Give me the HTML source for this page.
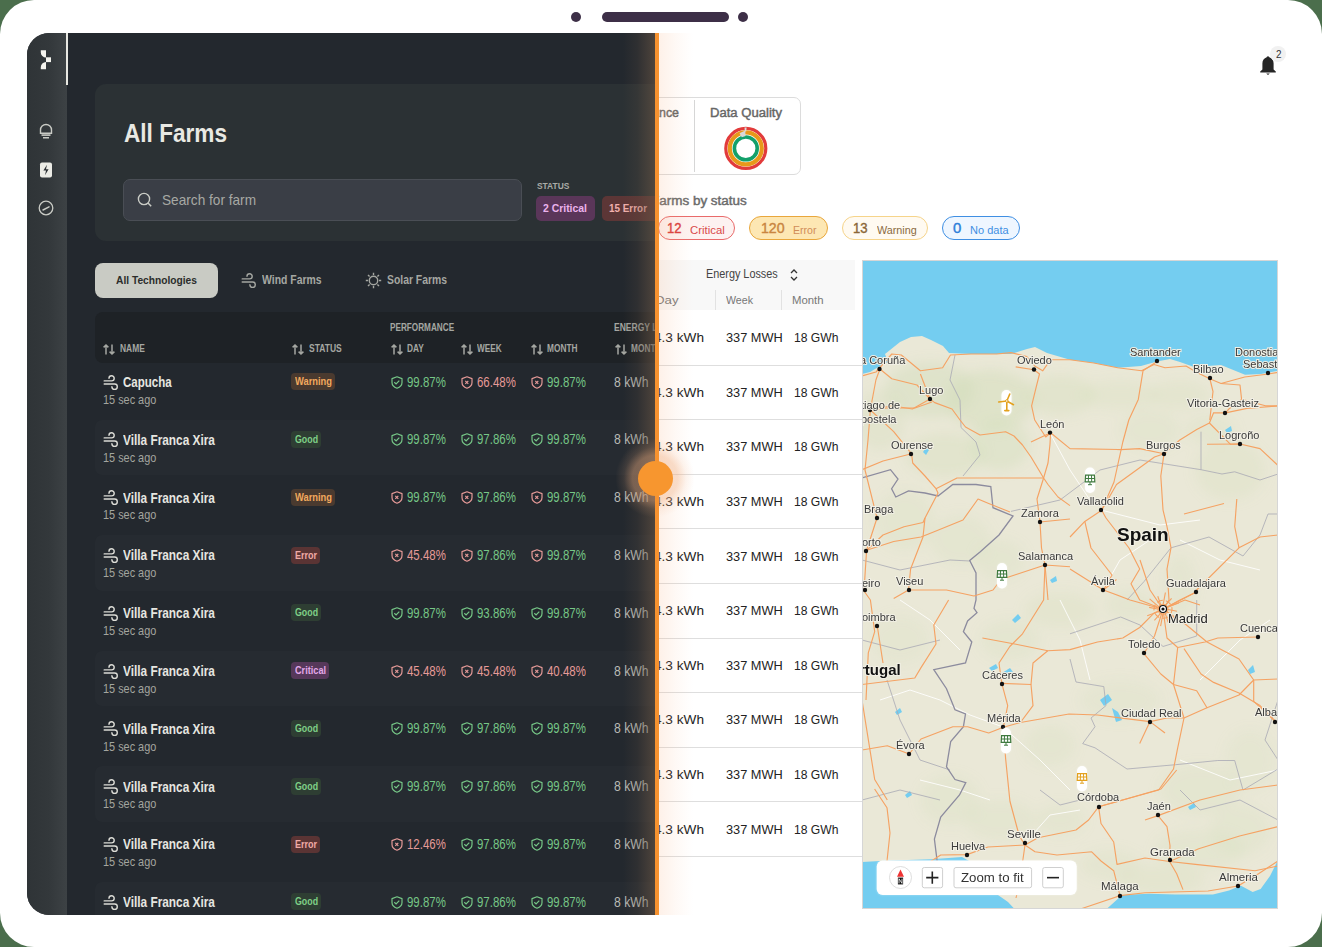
<!DOCTYPE html>
<html><head><meta charset="utf-8">
<style>
*{box-sizing:border-box;margin:0;padding:0}
html,body{width:1322px;height:947px;overflow:hidden;background:#4b6e4c;font-family:"Liberation Sans",sans-serif}
.abs{position:absolute}
.t{position:absolute;white-space:nowrap;line-height:0}
.i{position:absolute;overflow:visible}
#frame{position:absolute;left:0;top:0;width:1322px;height:947px;background:#fff;border-radius:34px;overflow:hidden}
.dot{position:absolute;background:#3d2f47;border-radius:6px}
#dark{position:absolute;left:27px;top:33px;width:628px;height:882px;background:#23282e;border-radius:22px 0 0 22px;overflow:hidden}
#dk{position:absolute;left:-27px;top:-33px;width:1322px;height:947px}
</style></head><body>
<div id="frame">
  <div class="dot" style="left:571px;top:12px;width:10px;height:10px"></div>
  <div class="dot" style="left:602px;top:12px;width:127px;height:10px"></div>
  <div class="dot" style="left:738px;top:12px;width:10px;height:10px"></div>

<div id="light">
<div class="abs" style="left:560px;top:97px;width:241px;height:78px;border:1px solid #dcdcdc;border-radius:7px;background:#fff"></div>
<div class="abs" style="left:694px;top:100px;width:1px;height:72px;background:#d6d6d6"></div>
<div class="t" style="left:608.00px;top:113.46px;font-size:13.08px;color:#666;transform:scaleX(0.9482);transform-origin:0 0;-webkit-text-stroke:0.45px #666;">Performance</div>
<div class="t" style="left:709.50px;top:113.46px;font-size:13.08px;color:#666;transform:scaleX(1.0003);transform-origin:0 0;-webkit-text-stroke:0.45px #666;">Data Quality</div>
<svg class="i" style="left:724px;top:127px" width="44" height="44" viewBox="0 0 44 44">
<circle cx="21.8" cy="21.4" r="20" fill="none" stroke="#e23b3b" stroke-width="3.2"/>
<circle cx="21.8" cy="21.4" r="16" fill="none" stroke="#e8981a" stroke-width="4.2"/>
<circle cx="21.8" cy="21.4" r="11.4" fill="none" stroke="#13a06a" stroke-width="3.6"/>
<path d="M20.5 0.5L22.6 0.5L22.2 4.6L20.8 4.6Z" fill="#dcdcdc"/>
<path d="M21.2 3.5L21.6 8.9L17.8 10.2L15.5 6.3Z" fill="#d8d8d8"/>
</svg>
<div class="t" style="left:651.30px;top:200.96px;font-size:13.08px;color:#6b6b6b;transform:scaleX(1.0297);transform-origin:0 0;-webkit-text-stroke:0.45px #6b6b6b;">Farms by status</div>
<div class="abs" style="left:658px;top:216px;width:77px;height:24px;border:1.2px solid #e96a6a;border-radius:12px;background:#fdf2f1"></div>
<div class="t" style="left:667.00px;top:228.36px;font-size:14.53px;color:#d93b3b;transform:scaleX(0.9032);transform-origin:0 0;-webkit-text-stroke:0.4px #d93b3b;">12</div>
<div class="t" style="left:689.70px;top:229.62px;font-size:10.90px;color:#d94a4a;transform:scaleX(1.0447);transform-origin:0 0;">Critical</div>
<div class="abs" style="left:749px;top:216px;width:79px;height:24px;border:1.2px solid #e9a73c;border-radius:12px;background:#fde7b3"></div>
<div class="t" style="left:760.60px;top:228.36px;font-size:14.53px;color:#c98540;transform:scaleX(0.9733);transform-origin:0 0;-webkit-text-stroke:0.4px #c98540;">120</div>
<div class="t" style="left:792.90px;top:229.62px;font-size:10.90px;color:#d08c58;transform:scaleX(0.9702);transform-origin:0 0;">Error</div>
<div class="abs" style="left:842px;top:216px;width:86px;height:24px;border:1.2px solid #f6d48a;border-radius:12px;background:#fffaf1"></div>
<div class="t" style="left:853.00px;top:228.36px;font-size:14.53px;color:#8a6636;transform:scaleX(0.9032);transform-origin:0 0;-webkit-text-stroke:0.4px #8a6636;">13</div>
<div class="t" style="left:876.60px;top:229.62px;font-size:10.90px;color:#8a6a40;transform:scaleX(0.9904);transform-origin:0 0;">Warning</div>
<div class="abs" style="left:942px;top:216px;width:78px;height:24px;border:1.2px solid #3f8fe3;border-radius:12px;background:#eef6ff"></div>
<div class="t" style="left:953.00px;top:228.36px;font-size:14.53px;color:#2f7fd9;transform:scaleX(1.0269);transform-origin:0 0;-webkit-text-stroke:0.4px #2f7fd9;">0</div>
<div class="t" style="left:969.60px;top:229.62px;font-size:10.90px;color:#3f8fe3;transform:scaleX(1.0111);transform-origin:0 0;">No data</div>
<div class="abs" style="left:560px;top:260px;width:295px;height:50px;background:#f8f8f8"></div>
<div class="t" style="left:706.00px;top:274.47px;font-size:11.92px;color:#444;transform:scaleX(0.9108);transform-origin:0 0;">Energy Losses</div>
<svg class="i" style="left:790px;top:268px" width="8" height="14" viewBox="0 0 8 14"><path d="M1 5L4 2L7 5M1 9L4 12L7 9" fill="none" stroke="#333" stroke-width="1.3"/></svg>
<div class="abs" style="left:715px;top:290px;width:1px;height:20px;background:#e2e2e2"></div>
<div class="abs" style="left:781px;top:290px;width:1px;height:20px;background:#e2e2e2"></div>
<div class="t" style="left:655.00px;top:299.87px;font-size:11.34px;color:#777;transform:scaleX(1.1706);transform-origin:0 0;">Day</div>
<div class="t" style="left:726.00px;top:299.87px;font-size:11.34px;color:#777;transform:scaleX(0.9384);transform-origin:0 0;">Week</div>
<div class="t" style="left:792.40px;top:299.87px;font-size:11.34px;color:#777;transform:scaleX(1.0030);transform-origin:0 0;">Month</div>
<div class="t" style="left:653.50px;top:338.26px;font-size:13.08px;color:#222;transform:scaleX(1.0421);transform-origin:0 0;">4.3 kWh</div>
<div class="t" style="left:725.70px;top:338.26px;font-size:13.08px;color:#222;transform:scaleX(0.9768);transform-origin:0 0;">337 MWH</div>
<div class="t" style="left:793.60px;top:338.26px;font-size:13.08px;color:#222;transform:scaleX(0.9254);transform-origin:0 0;">18 GWh</div>
<div class="abs" style="left:560px;top:364.5px;width:302px;height:1px;background:#dedede"></div>
<div class="t" style="left:653.50px;top:392.86px;font-size:13.08px;color:#222;transform:scaleX(1.0421);transform-origin:0 0;">4.3 kWh</div>
<div class="t" style="left:725.70px;top:392.86px;font-size:13.08px;color:#222;transform:scaleX(0.9768);transform-origin:0 0;">337 MWH</div>
<div class="t" style="left:793.60px;top:392.86px;font-size:13.08px;color:#222;transform:scaleX(0.9254);transform-origin:0 0;">18 GWh</div>
<div class="abs" style="left:560px;top:419.1px;width:302px;height:1px;background:#dedede"></div>
<div class="t" style="left:653.50px;top:447.46px;font-size:13.08px;color:#222;transform:scaleX(1.0421);transform-origin:0 0;">4.3 kWh</div>
<div class="t" style="left:725.70px;top:447.46px;font-size:13.08px;color:#222;transform:scaleX(0.9768);transform-origin:0 0;">337 MWH</div>
<div class="t" style="left:793.60px;top:447.46px;font-size:13.08px;color:#222;transform:scaleX(0.9254);transform-origin:0 0;">18 GWh</div>
<div class="abs" style="left:560px;top:473.7px;width:302px;height:1px;background:#dedede"></div>
<div class="t" style="left:653.50px;top:502.06px;font-size:13.08px;color:#222;transform:scaleX(1.0421);transform-origin:0 0;">4.3 kWh</div>
<div class="t" style="left:725.70px;top:502.06px;font-size:13.08px;color:#222;transform:scaleX(0.9768);transform-origin:0 0;">337 MWH</div>
<div class="t" style="left:793.60px;top:502.06px;font-size:13.08px;color:#222;transform:scaleX(0.9254);transform-origin:0 0;">18 GWh</div>
<div class="abs" style="left:560px;top:528.3px;width:302px;height:1px;background:#dedede"></div>
<div class="t" style="left:653.50px;top:556.66px;font-size:13.08px;color:#222;transform:scaleX(1.0421);transform-origin:0 0;">4.3 kWh</div>
<div class="t" style="left:725.70px;top:556.66px;font-size:13.08px;color:#222;transform:scaleX(0.9768);transform-origin:0 0;">337 MWH</div>
<div class="t" style="left:793.60px;top:556.66px;font-size:13.08px;color:#222;transform:scaleX(0.9254);transform-origin:0 0;">18 GWh</div>
<div class="abs" style="left:560px;top:582.9px;width:302px;height:1px;background:#dedede"></div>
<div class="t" style="left:653.50px;top:611.26px;font-size:13.08px;color:#222;transform:scaleX(1.0421);transform-origin:0 0;">4.3 kWh</div>
<div class="t" style="left:725.70px;top:611.26px;font-size:13.08px;color:#222;transform:scaleX(0.9768);transform-origin:0 0;">337 MWH</div>
<div class="t" style="left:793.60px;top:611.26px;font-size:13.08px;color:#222;transform:scaleX(0.9254);transform-origin:0 0;">18 GWh</div>
<div class="abs" style="left:560px;top:637.5px;width:302px;height:1px;background:#dedede"></div>
<div class="t" style="left:653.50px;top:665.86px;font-size:13.08px;color:#222;transform:scaleX(1.0421);transform-origin:0 0;">4.3 kWh</div>
<div class="t" style="left:725.70px;top:665.86px;font-size:13.08px;color:#222;transform:scaleX(0.9768);transform-origin:0 0;">337 MWH</div>
<div class="t" style="left:793.60px;top:665.86px;font-size:13.08px;color:#222;transform:scaleX(0.9254);transform-origin:0 0;">18 GWh</div>
<div class="abs" style="left:560px;top:692.1px;width:302px;height:1px;background:#dedede"></div>
<div class="t" style="left:653.50px;top:720.46px;font-size:13.08px;color:#222;transform:scaleX(1.0421);transform-origin:0 0;">4.3 kWh</div>
<div class="t" style="left:725.70px;top:720.46px;font-size:13.08px;color:#222;transform:scaleX(0.9768);transform-origin:0 0;">337 MWH</div>
<div class="t" style="left:793.60px;top:720.46px;font-size:13.08px;color:#222;transform:scaleX(0.9254);transform-origin:0 0;">18 GWh</div>
<div class="abs" style="left:560px;top:746.7px;width:302px;height:1px;background:#dedede"></div>
<div class="t" style="left:653.50px;top:775.06px;font-size:13.08px;color:#222;transform:scaleX(1.0421);transform-origin:0 0;">4.3 kWh</div>
<div class="t" style="left:725.70px;top:775.06px;font-size:13.08px;color:#222;transform:scaleX(0.9768);transform-origin:0 0;">337 MWH</div>
<div class="t" style="left:793.60px;top:775.06px;font-size:13.08px;color:#222;transform:scaleX(0.9254);transform-origin:0 0;">18 GWh</div>
<div class="abs" style="left:560px;top:801.3px;width:302px;height:1px;background:#dedede"></div>
<div class="t" style="left:653.50px;top:829.66px;font-size:13.08px;color:#222;transform:scaleX(1.0421);transform-origin:0 0;">4.3 kWh</div>
<div class="t" style="left:725.70px;top:829.66px;font-size:13.08px;color:#222;transform:scaleX(0.9768);transform-origin:0 0;">337 MWH</div>
<div class="t" style="left:793.60px;top:829.66px;font-size:13.08px;color:#222;transform:scaleX(0.9254);transform-origin:0 0;">18 GWh</div>
<div class="abs" style="left:560px;top:855.9px;width:302px;height:1px;background:#dedede"></div>
<svg class="i" style="left:1259px;top:55px" width="18" height="21" viewBox="0 0 18 21">
<path d="M9 1.2C10 1.2 10.3 2 10.3 2.3C13 3.2 14.6 5.5 14.6 8.5V14.6L16.8 16.6V17.4H1.2V16.6L3.4 14.6V8.5C3.4 5.5 5 3.2 7.7 2.3C7.7 2 8 1.2 9 1.2Z" fill="#262626"/>
<path d="M7.2 18.4H10.8L9 20Z" fill="#262626"/></svg>
<div class="abs" style="left:1270px;top:46px;width:16px;height:16px;border-radius:8px;background:#f1f1f1"></div>
<div class="t" style="left:1275.50px;top:54.22px;font-size:10.90px;color:#333;transform:scaleX(0.9073);transform-origin:0 0;">2</div>
</div>
<div class="abs" id="map" style="left:862px;top:260px;width:416px;height:649px;background:#ece9dc;overflow:hidden">
<svg style="position:absolute;left:0;top:0" width="416" height="649" viewBox="0 0 416 649">
<defs><filter id="bl" x="-50%" y="-50%" width="200%" height="200%"><feGaussianBlur stdDeviation="6"/></filter><filter id="sh" x="-50%" y="-50%" width="200%" height="200%"><feGaussianBlur stdDeviation="1.2"/></filter></defs>
<rect width="416" height="649" fill="#eae8d7"/>
<g filter="url(#bl)">
<ellipse cx="68.0" cy="130.0" rx="45" ry="28" fill="#cfdcb6" opacity="0.39"/>
<ellipse cx="128.0" cy="140.0" rx="45" ry="30" fill="#cfdcb6" opacity="0.42"/>
<ellipse cx="198.0" cy="135.0" rx="35" ry="20" fill="#cfdcb6" opacity="0.32"/>
<ellipse cx="18.0" cy="160.0" rx="25" ry="30" fill="#cfdcb6" opacity="0.28"/>
<ellipse cx="83.0" cy="195.0" rx="40" ry="22" fill="#cfdcb6" opacity="0.32"/>
<ellipse cx="138.0" cy="185.0" rx="30" ry="25" fill="#cfdcb6" opacity="0.35"/>
<ellipse cx="258.0" cy="135.0" rx="40" ry="15" fill="#cfdcb6" opacity="0.24"/>
<ellipse cx="318.0" cy="135.0" rx="30" ry="15" fill="#cfdcb6" opacity="0.24"/>
<ellipse cx="368.0" cy="210.0" rx="35" ry="30" fill="#cfdcb6" opacity="0.24"/>
<ellipse cx="348.0" cy="170.0" rx="25" ry="15" fill="#cfdcb6" opacity="0.21"/>
<ellipse cx="43.0" cy="260.0" rx="30" ry="30" fill="#cfdcb6" opacity="0.21"/>
<ellipse cx="98.0" cy="280.0" rx="30" ry="25" fill="#cfdcb6" opacity="0.21"/>
<ellipse cx="268.0" cy="345.0" rx="25" ry="15" fill="#cfdcb6" opacity="0.21"/>
<ellipse cx="198.0" cy="350.0" rx="35" ry="18" fill="#cfdcb6" opacity="0.24"/>
<ellipse cx="318.0" cy="325.0" rx="15" ry="30" fill="#cfdcb6" opacity="0.21"/>
<ellipse cx="148.0" cy="380.0" rx="30" ry="20" fill="#cfdcb6" opacity="0.21"/>
<ellipse cx="258.0" cy="440.0" rx="40" ry="20" fill="#cfdcb6" opacity="0.17"/>
<ellipse cx="188.0" cy="485.0" rx="25" ry="20" fill="#cfdcb6" opacity="0.21"/>
<ellipse cx="338.0" cy="530.0" rx="40" ry="25" fill="#cfdcb6" opacity="0.21"/>
<ellipse cx="378.0" cy="570.0" rx="30" ry="25" fill="#cfdcb6" opacity="0.21"/>
<ellipse cx="298.0" cy="620.0" rx="45" ry="15" fill="#cfdcb6" opacity="0.24"/>
<ellipse cx="248.0" cy="605.0" rx="30" ry="15" fill="#cfdcb6" opacity="0.21"/>
<ellipse cx="138.0" cy="560.0" rx="35" ry="20" fill="#cfdcb6" opacity="0.21"/>
<ellipse cx="88.0" cy="540.0" rx="30" ry="25" fill="#cfdcb6" opacity="0.21"/>
<ellipse cx="198.0" cy="560.0" rx="25" ry="15" fill="#cfdcb6" opacity="0.21"/>
<ellipse cx="338.0" cy="590.0" rx="45" ry="20" fill="#cfdcb6" opacity="0.21"/>
<ellipse cx="388.0" cy="500.0" rx="25" ry="30" fill="#cfdcb6" opacity="0.17"/>
<ellipse cx="38.0" cy="380.0" rx="30" ry="25" fill="#cfdcb6" opacity="0.17"/>
<ellipse cx="138.0" cy="300.0" rx="25" ry="20" fill="#cfdcb6" opacity="0.21"/>
<ellipse cx="288.0" cy="170.0" rx="30" ry="20" fill="#cfdcb6" opacity="0.21"/>
</g>
<polygon points="0.0,0.0 416.0,0.0 416.0,110.8 399.0,114.0 383.0,114.8 359.0,105.0 332.0,107.0 318.0,102.0 308.0,99.0 295.0,101.6 279.0,106.0 256.0,107.7 232.0,103.0 208.0,99.7 185.0,93.0 173.0,87.0 165.0,89.0 149.0,94.0 109.0,94.0 87.0,93.0 81.0,86.0 69.0,80.0 60.0,76.0 49.0,77.0 38.0,82.0 23.0,94.0 26.0,102.0 18.0,106.0 8.0,112.0 0.0,114.0" fill="#74cdf0"/>
<polygon points="0.0,602.0 18.0,601.0 73.0,599.0 100.0,597.0 123.0,610.0 136.0,635.0 146.0,642.0 153.0,649.5 0.0,649.5" fill="#74cdf0"/>
<polygon points="244.0,649.5 260.0,635.0 287.0,633.7 313.0,634.5 351.0,634.5 367.0,630.5 379.0,625.8 390.7,632.0 398.6,629.0 408.0,616.0 416.0,600.0 416.0,649.5" fill="#74cdf0"/>
<polygon points="61.0,192.0 65.0,186.0 67.0,190.0 64.0,195.0" fill="#74cdf0"/>
<polygon points="150.0,360.0 156.0,354.0 159.0,358.0 153.0,363.0" fill="#74cdf0"/>
<polygon points="238.0,440.0 246.0,434.0 250.0,440.0 242.0,446.0" fill="#74cdf0"/>
<polygon points="250.0,448.0 256.0,452.0 260.0,460.0 254.0,462.0" fill="#74cdf0"/>
<polygon points="140.0,413.0 148.0,408.0 151.0,412.0 144.0,416.0" fill="#74cdf0"/>
<polygon points="127.0,408.0 134.0,404.0 136.0,408.0 130.0,411.0" fill="#74cdf0"/>
<polygon points="326.0,547.0 332.0,543.0 334.0,547.0 328.0,550.0" fill="#74cdf0"/>
<polygon points="33.0,452.0 38.0,448.0 40.0,452.0 35.0,455.0" fill="#74cdf0"/>
<polygon points="363.0,170.0 369.0,166.0 370.0,171.0 365.0,173.0" fill="#74cdf0"/>
<polygon points="386.0,410.0 391.0,405.0 393.0,412.0 388.0,414.0" fill="#74cdf0"/>
<polygon points="43.0,535.0 48.0,531.0 50.0,535.0 45.0,538.0" fill="#74cdf0"/>
<polygon points="188.0,320.0 194.0,316.0 195.0,321.0 190.0,323.0" fill="#74cdf0"/>
<polyline points="188.0,173.0 208.0,210.0 228.0,240.0" fill="none" stroke="#ffffff" stroke-width="1" opacity="0.85"/>
<polyline points="239.0,250.0 298.0,265.0 338.0,260.0" fill="none" stroke="#ffffff" stroke-width="1" opacity="0.85"/>
<polyline points="141.0,467.0 178.0,500.0 208.0,530.0" fill="none" stroke="#ffffff" stroke-width="1" opacity="0.85"/>
<polyline points="163.0,583.0 188.0,555.0 218.0,550.0" fill="none" stroke="#ffffff" stroke-width="1" opacity="0.85"/>
<polyline points="78.0,440.0 108.0,455.0 141.0,467.0" fill="none" stroke="#ffffff" stroke-width="1" opacity="0.85"/>
<polyline points="241.0,330.0 258.0,300.0 288.0,280.0" fill="none" stroke="#ffffff" stroke-width="1" opacity="0.85"/>
<polyline points="58.0,520.0 98.0,530.0 128.0,540.0" fill="none" stroke="#ffffff" stroke-width="1" opacity="0.85"/>
<polyline points="318.0,500.0 368.0,520.0 416.0,510.0" fill="none" stroke="#ffffff" stroke-width="1" opacity="0.85"/>
<polyline points="38.0,340.0 68.0,360.0 98.0,390.0" fill="none" stroke="#ffffff" stroke-width="1" opacity="0.85"/>
<polyline points="338.0,420.0 378.0,380.0 408.0,360.0" fill="none" stroke="#ffffff" stroke-width="1" opacity="0.85"/>
<polyline points="18.0,440.0 48.0,430.0 78.0,440.0" fill="none" stroke="#ffffff" stroke-width="1" opacity="0.85"/>
<polyline points="318.0,280.0 358.0,300.0 398.0,310.0" fill="none" stroke="#ffffff" stroke-width="1" opacity="0.85"/>
<polyline points="198.0,340.0 218.0,380.0 228.0,420.0" fill="none" stroke="#ffffff" stroke-width="1" opacity="0.85"/>
<polyline points="99.0,167.5 114.0,182.0 118.0,195.0 101.0,216.0" fill="none" stroke="#a9a9b4" stroke-width="1" opacity="0.8"/>
<polyline points="339.0,171.7 339.0,209.7 360.0,214.0 372.7,211.8 398.0,220.0 416.0,214.0" fill="none" stroke="#a9a9b4" stroke-width="1" opacity="0.8"/>
<polyline points="416.0,254.0 406.0,254.0 398.0,275.0 381.0,296.0 347.0,277.0 309.0,287.8 282.0,321.6 265.0,340.0" fill="none" stroke="#a9a9b4" stroke-width="1" opacity="0.8"/>
<polyline points="208.0,399.0 214.0,422.0 241.8,426.6 244.0,445.6 229.0,458.0 233.0,466.7 220.7,483.6 233.0,487.8 265.0,509.0 313.6,504.7 355.8,500.5 372.7,500.5 381.0,530.0 416.0,509.0" fill="none" stroke="#a9a9b4" stroke-width="1" opacity="0.8"/>
<polyline points="208.0,373.8 258.7,357.0 278.0,365.0 301.0,386.5 334.7,376.0 334.7,340.0" fill="none" stroke="#a9a9b4" stroke-width="1" opacity="0.8"/>
<polyline points="93.0,95.0 88.0,120.0 98.0,140.0 99.0,167.5" fill="none" stroke="#a9a9b4" stroke-width="1" opacity="0.8"/>
<polyline points="149.0,251.4 198.0,240.0 238.0,210.0 278.0,200.0 339.0,209.7" fill="none" stroke="#a9a9b4" stroke-width="1" opacity="0.8"/>
<polyline points="0.0,300.0 38.0,310.0 88.0,300.0 108.0,301.0" fill="none" stroke="#a9a9b4" stroke-width="1" opacity="0.8"/>
<polyline points="0.0,380.0 38.0,390.0 78.0,380.0" fill="none" stroke="#a9a9b4" stroke-width="1" opacity="0.8"/>
<polyline points="25.0,420.0 38.0,460.0 58.0,500.0 88.0,510.0" fill="none" stroke="#a9a9b4" stroke-width="1" opacity="0.8"/>
<polyline points="0.0,540.0 38.0,530.0 78.0,540.0" fill="none" stroke="#a9a9b4" stroke-width="1" opacity="0.8"/>
<polyline points="178.0,530.0 198.0,545.0 218.0,540.0" fill="none" stroke="#a9a9b4" stroke-width="1" opacity="0.8"/>
<polyline points="318.0,530.0 338.0,550.0 378.0,540.0 416.0,560.0" fill="none" stroke="#a9a9b4" stroke-width="1" opacity="0.8"/>
<polyline points="416.0,440.0 403.0,480.0 416.0,500.0" fill="none" stroke="#a9a9b4" stroke-width="1" opacity="0.8"/>
<polyline points="0.0,218.0 28.5,209.7 36.0,219.0 29.6,228.7 33.8,237.0 46.5,230.8 63.0,233.0 76.0,236.0 90.8,224.5 114.0,224.5 128.8,226.6 131.0,247.7 151.0,256.0 137.0,275.0 118.0,292.0 107.7,300.5 114.0,313.0 114.0,340.0 112.0,348.4 115.0,352.7 105.6,361.0 101.4,371.7 109.8,382.0 103.5,403.0 71.8,409.7 84.5,428.7 93.0,449.8 103.5,454.0 101.4,466.7 88.7,481.5 84.5,506.8 93.0,519.5 103.8,522.6 97.5,535.0 78.7,557.0 72.4,579.0 75.5,604.0" fill="none" stroke="#8c8b9e" stroke-width="1.3"/>
<g fill="none" stroke="#f5a263" stroke-width="1.15" stroke-linejoin="round">
<polyline points="1.0,115.6 14.0,112.0 29.8,94.0 39.3,95.0 58.4,110.8 80.6,107.7 88.5,95.0 109.0,94.0 134.6,94.0 149.0,92.6 164.8,96.5 172.7,106.0 180.7,110.8 188.6,99.7 208.0,99.7 231.8,103.0 255.7,107.7 279.5,110.8 292.0,104.5 303.0,107.7 324.0,106.0 335.0,112.4 347.8,118.8 359.0,123.5 382.7,117.0 406.5,114.0 415.8,112.4"/>
<polyline points="17.9,109.0 29.8,118.8 55.0,125.0 68.0,139.0 72.7,142.6 90.0,149.0 98.0,160.0 103.5,167.0 118.0,175.0 143.6,171.7 152.0,176.0 160.5,185.0 169.0,197.0 181.6,218.0 186.0,224.5 196.0,237.0 208.0,245.6"/>
<polyline points="58.4,114.0 68.0,139.0"/>
<polyline points="68.0,139.0 50.4,149.0 29.8,145.8 8.3,150.0 13.9,120.0 17.9,109.0"/>
<polyline points="8.4,150.0 25.0,148.0 53.0,148.0 70.0,142.0"/>
<polyline points="153.7,106.9 172.0,109.7 177.5,114.0 174.3,126.7 169.6,145.8 172.7,160.0 183.7,177.0 188.6,172.7"/>
<polyline points="188.6,172.7 188.0,184.0 186.0,203.0 181.6,218.0 175.0,239.0 178.0,262.0 179.5,288.0 183.0,305.0 186.0,340.0"/>
<polyline points="169.0,182.0 188.6,172.7 208.0,188.6 258.7,189.6 277.7,188.6 302.0,193.8"/>
<polyline points="295.0,101.6 281.0,110.8 276.3,139.4 266.8,160.0 260.8,182.0 252.0,222.0 239.7,250.3"/>
<polyline points="347.8,118.5 351.0,131.5 347.8,160.0"/>
<polyline points="359.0,123.5 378.0,125.0 379.6,139.4 366.9,149.0 363.5,152.9"/>
<polyline points="379.6,139.4 403.4,145.8 415.8,145.8"/>
<polyline points="302.0,193.8 317.8,180.0 334.7,169.6 347.4,163.0 351.6,152.7 363.5,152.9 385.0,148.4 416.0,146.0"/>
<polyline points="347.4,163.0 368.5,184.3 378.0,184.0 398.0,188.6 416.0,205.5"/>
<polyline points="345.0,184.3 378.0,184.0"/>
<polyline points="302.0,193.8 298.8,216.0 301.0,249.8 305.0,266.7 309.0,287.8 305.0,309.0 307.0,340.0 301.0,349.3"/>
<polyline points="302.0,193.8 292.5,197.0 254.5,224.5 239.7,250.3 222.8,261.4 208.0,277.0"/>
<polyline points="239.7,250.3 244.0,258.0 267.0,288.0 277.7,309.0 269.0,323.7 277.7,340.0 301.0,349.3"/>
<polyline points="222.8,261.4 229.0,288.0 250.0,315.0 241.4,330.0"/>
<polyline points="374.8,239.0 372.7,266.7 377.0,287.8 398.0,277.0 416.0,275.0"/>
<polyline points="377.0,287.8 334.7,330.0 334.3,332.0 318.0,340.0 301.0,349.3"/>
<polyline points="322.0,254.0 362.0,243.5"/>
<polyline points="208.0,309.0 241.4,330.0 254.5,319.5"/>
<polyline points="241.4,330.0 268.0,340.0 301.0,349.3"/>
<polyline points="0.0,209.7 21.0,201.0 49.6,193.8 31.7,171.7 8.4,150.0"/>
<polyline points="49.6,193.8 50.7,203.0 63.0,216.0 74.0,228.7 76.0,233.0 63.0,258.0 61.0,277.0 48.6,309.0 46.5,330.0"/>
<polyline points="74.0,228.7 95.0,218.0 126.7,218.0 181.6,218.0"/>
<polyline points="4.6,290.3 21.0,275.0 42.0,266.7 61.0,262.5 63.0,258.0"/>
<polyline points="4.6,290.3 31.7,281.5 59.0,277.0 74.0,271.0 101.0,260.0 116.0,239.0 126.7,243.5 148.0,252.0"/>
<polyline points="31.7,338.5 46.5,330.0 84.5,330.0 112.0,336.0 131.0,330.0 139.0,319.5 183.0,305.0 208.0,306.8"/>
<polyline points="178.0,262.0 208.0,259.0"/>
<polyline points="8.4,150.0 6.0,180.0 3.0,210.0 15.0,258.0 4.6,290.3 2.0,331.0 8.4,340.0 12.7,371.7 6.3,392.8 4.0,440.0"/>
<polyline points="15.2,365.5 21.0,403.0"/>
<polyline points="86.6,340.0 71.8,365.0 74.0,384.0 59.0,407.6 52.8,418.0 0.0,424.5"/>
<polyline points="0.0,490.0 25.3,485.7 47.2,494.0 59.0,479.0 90.8,466.7 105.6,466.7 126.7,473.0 141.4,467.3 158.4,462.5 207.0,454.0 235.5,455.0 288.0,461.6"/>
<polyline points="141.4,467.3 145.7,445.6 139.8,423.4 137.0,403.0 147.8,386.5 160.5,373.8 181.6,340.0 183.0,305.0"/>
<polyline points="120.4,378.0 154.0,384.3 185.8,390.7 208.0,389.6 235.5,382.0 260.8,378.0 277.7,367.5 292.5,352.7 301.0,349.3"/>
<polyline points="139.8,423.4 169.0,424.5 171.0,403.0 185.8,390.7"/>
<polyline points="169.0,424.5 171.0,445.6 158.4,462.5"/>
<polyline points="141.4,467.3 143.6,498.4 147.8,540.0 148.0,541.5 157.3,576.0 163.0,585.0"/>
<polyline points="12.6,529.0 25.0,547.8 28.0,573.0 25.0,601.0"/>
<polyline points="0.0,440.0 12.7,519.5 25.3,540.0"/>
<polyline points="301.0,349.3 292.5,376.0 281.9,393.6 298.8,414.0 311.5,424.5 334.7,430.8 345.0,447.7 377.0,435.0 391.7,420.0 416.0,419.0"/>
<polyline points="301.0,349.3 305.0,378.0 315.7,387.5 311.5,424.5 322.0,458.0 315.7,487.8 311.5,509.0 296.7,530.0 260.8,540.0 236.6,546.8"/>
<polyline points="315.7,387.5 343.0,382.0 355.8,378.0 396.0,377.0"/>
<polyline points="301.0,349.3 322.0,363.0 345.0,382.0 377.0,399.0 391.7,420.0 391.7,441.4 413.0,461.0"/>
<polyline points="322.0,388.6 339.0,414.0 351.6,422.4 377.0,433.0 398.0,445.6 413.0,461.0"/>
<polyline points="322.0,458.0 345.0,447.7"/>
<polyline points="288.0,461.6 305.0,458.0 322.0,458.0"/>
<polyline points="288.0,461.6 277.7,483.6"/>
<polyline points="288.0,461.6 303.0,473.0"/>
<polyline points="301.0,349.3 334.3,332.0"/>
<polyline points="301.0,349.3 288.0,330.0 278.0,300.0"/>
<polyline points="301.0,349.3 323.0,340.0 338.0,345.0"/>
<polyline points="236.6,546.8 226.6,560.0 214.0,570.0 176.0,577.7 163.0,585.0 126.0,587.0 105.0,594.6 78.7,595.0 63.0,605.0"/>
<polyline points="163.0,585.0 173.0,591.8 195.0,595.0 229.7,591.8 239.0,601.0 251.7,610.7 258.0,635.6"/>
<polyline points="236.6,546.8 239.0,563.5 251.7,582.0 255.0,604.4 283.0,598.0 307.6,601.5 333.5,604.4 393.0,610.7 416.0,606.0"/>
<polyline points="236.6,546.8 267.5,538.0 299.0,529.0 314.7,510.0"/>
<polyline points="283.0,560.0 296.0,555.6 305.0,566.6 308.0,585.5 307.6,601.5 314.7,613.8 321.0,629.6"/>
<polyline points="220.0,648.5 258.0,635.6 283.0,632.7 346.0,631.0 376.0,626.0 396.5,613.8 416.0,601.0"/>
<polyline points="307.6,601.5 336.7,588.7 377.6,576.0 416.0,566.6"/>
<polyline points="296.0,555.6 338.0,540.0 378.0,530.0 416.0,525.0"/>
<polyline points="154.0,638.0 158.0,620.0 163.0,585.0"/>
</g>
<g fill="none" stroke="#f5a263" stroke-width="1.1">
<circle cx="301.0" cy="349.3" r="5" /><circle cx="301.0" cy="349.3" r="9" stroke-dasharray="6 3"/>
<path d="M305.0 349.3L314.9 351.2"/>
<path d="M304.5 351.3L314.4 359.8"/>
<path d="M303.0 352.8L306.2 362.3"/>
<path d="M301.0 353.3L298.6 366.1"/>
<path d="M299.0 352.8L292.4 360.3"/>
<path d="M297.5 351.3L285.2 355.7"/>
<path d="M297.0 349.3L287.1 347.4"/>
<path d="M297.5 347.3L287.6 338.8"/>
<path d="M299.0 345.8L295.8 336.3"/>
<path d="M301.0 345.3L303.4 332.5"/>
<path d="M303.0 345.8L309.6 338.3"/>
<path d="M304.5 347.3L316.8 342.9"/>
</g>
<circle cx="17.5" cy="109.0" r="2.2" fill="#111"/>
<circle cx="8.0" cy="150.0" r="2.2" fill="#111"/>
<circle cx="68.0" cy="139.0" r="2.2" fill="#111"/>
<circle cx="172.0" cy="109.5" r="2.2" fill="#111"/>
<circle cx="188.0" cy="172.6" r="2.2" fill="#111"/>
<circle cx="295.0" cy="101.0" r="2.2" fill="#111"/>
<circle cx="348.0" cy="118.0" r="2.2" fill="#111"/>
<circle cx="406.0" cy="113.0" r="2.2" fill="#111"/>
<circle cx="363.0" cy="153.0" r="2.2" fill="#111"/>
<circle cx="378.0" cy="184.0" r="2.2" fill="#111"/>
<circle cx="302.0" cy="194.0" r="2.2" fill="#111"/>
<circle cx="49.0" cy="194.0" r="2.2" fill="#111"/>
<circle cx="239.0" cy="250.0" r="2.2" fill="#111"/>
<circle cx="178.0" cy="262.0" r="2.2" fill="#111"/>
<circle cx="15.0" cy="258.0" r="2.2" fill="#111"/>
<circle cx="4.0" cy="291.0" r="2.2" fill="#111"/>
<circle cx="183.0" cy="305.0" r="2.2" fill="#111"/>
<circle cx="3.0" cy="330.0" r="2.2" fill="#111"/>
<circle cx="47.0" cy="330.0" r="2.2" fill="#111"/>
<circle cx="241.0" cy="330.0" r="2.2" fill="#111"/>
<circle cx="334.0" cy="332.0" r="2.2" fill="#111"/>
<circle cx="301.0" cy="349.0" r="3.5" fill="#fff" stroke="#111" stroke-width="1.2"/><circle cx="301.0" cy="349.0" r="1.6" fill="#111"/>
<circle cx="15.0" cy="366.0" r="2.2" fill="#111"/>
<circle cx="396.0" cy="377.0" r="2.2" fill="#111"/>
<circle cx="282.0" cy="393.0" r="2.2" fill="#111"/>
<circle cx="140.0" cy="424.0" r="2.2" fill="#111"/>
<circle cx="141.0" cy="467.0" r="2.2" fill="#111"/>
<circle cx="288.0" cy="462.0" r="2.2" fill="#111"/>
<circle cx="413.0" cy="462.0" r="2.2" fill="#111"/>
<circle cx="47.0" cy="494.0" r="2.2" fill="#111"/>
<circle cx="237.0" cy="547.0" r="2.2" fill="#111"/>
<circle cx="296.0" cy="555.0" r="2.2" fill="#111"/>
<circle cx="163.0" cy="583.0" r="2.2" fill="#111"/>
<circle cx="105.0" cy="595.0" r="2.2" fill="#111"/>
<circle cx="308.0" cy="600.0" r="2.2" fill="#111"/>
<circle cx="258.0" cy="636.0" r="2.2" fill="#111"/>
<circle cx="376.0" cy="626.0" r="2.2" fill="#111"/>
<g font-family="Liberation Sans" fill="#3a3a3a" stroke="#f2f0e6" stroke-width="2" paint-order="stroke">
<text x="-2.0" y="103.5" font-size="11.0">a Coruña</text>
<text x="-1.0" y="149.0" font-size="11.0">tiago de</text>
<text x="-1.0" y="163.0" font-size="11.0">postela</text>
<text x="57.0" y="134.0" font-size="11.0">Lugo</text>
<text x="155.0" y="104.0" font-size="11.0">Oviedo</text>
<text x="178.0" y="168.0" font-size="11.0">León</text>
<text x="268.0" y="96.0" font-size="11.0">Santander</text>
<text x="331.0" y="113.0" font-size="11.0">Bilbao</text>
<text x="373.0" y="96.0" font-size="11.0">Donostia</text>
<text x="381.0" y="108.0" font-size="11.0">Sebast</text>
<text x="325.0" y="147.0" font-size="11.0">Vitoria-Gasteiz</text>
<text x="357.0" y="179.0" font-size="11.0">Logroño</text>
<text x="284.0" y="189.0" font-size="11.0">Burgos</text>
<text x="29.0" y="189.0" font-size="11.0">Ourense</text>
<text x="215.0" y="245.0" font-size="11.0">Valladolid</text>
<text x="159.0" y="257.0" font-size="11.0">Zamora</text>
<text x="2.0" y="253.0" font-size="11.0">Braga</text>
<text x="0.0" y="286.0" font-size="11.0">orto</text>
<text x="156.0" y="300.0" font-size="11.0">Salamanca</text>
<text x="0.0" y="327.0" font-size="11.0">eiro</text>
<text x="34.0" y="325.0" font-size="11.0">Viseu</text>
<text x="229.0" y="325.0" font-size="11.0">Ávila</text>
<text x="304.0" y="327.0" font-size="11.0">Guadalajara</text>
<text x="0.0" y="361.0" font-size="11.0">oimbra</text>
<text x="378.0" y="372.0" font-size="11.0">Cuenca</text>
<text x="266.0" y="388.0" font-size="11.0">Toledo</text>
<text x="120.0" y="419.0" font-size="11.0">Cáceres</text>
<text x="125.0" y="462.0" font-size="11.0">Mérida</text>
<text x="259.0" y="457.0" font-size="11.0">Ciudad Real</text>
<text x="393.0" y="456.0" font-size="11.0">Albac</text>
<text x="34.0" y="489.0" font-size="11.0">Évora</text>
<text x="215.0" y="541.0" font-size="11.0">Córdoba</text>
<text x="285.0" y="550.0" font-size="11.0">Jaén</text>
<text x="145.0" y="578.0" font-size="11.5">Seville</text>
<text x="89.0" y="590.0" font-size="11.0">Huelva</text>
<text x="288.0" y="596.0" font-size="11.5">Granada</text>
<text x="239.0" y="630.0" font-size="11.5">Málaga</text>
<text x="357.0" y="621.0" font-size="11.5">Almeria</text>
</g>
<text x="255.0" y="281.0" font-family="Liberation Sans" font-weight="bold" font-size="19" fill="#111" stroke="#f2f0e6" stroke-width="2" paint-order="stroke">Spain</text>
<text x="306.0" y="363.0" font-family="Liberation Sans" font-size="13" fill="#222" stroke="#f2f0e6" stroke-width="2" paint-order="stroke">Madrid</text>
<text x="-3.0" y="415.0" font-family="Liberation Sans" font-weight="bold" font-size="15" fill="#111" stroke="#f2f0e6" stroke-width="2" paint-order="stroke">rtugal</text>
<g transform="translate(139.5,130.0)"><rect x="0" y="0" width="10" height="25.5" rx="5" fill="#fff" filter="url(#sh)" opacity="0.5"/><rect x="0" y="0" width="10" height="25.5" rx="5" fill="#fff"/><path d="M5.3 11L5.3 20.4M3.3 20.6H7.3M5.3 11L8.3 4M5.3 11L-2.8 12M5.3 11L12 14.7" stroke="#e3a11e" stroke-width="1.6" fill="none" stroke-linecap="round"/><circle cx="5.3" cy="11" r="1.3" fill="#fff" stroke="#e3a11e" stroke-width="1"/></g>
<g transform="translate(223.0,207.5)"><rect x="0" y="0" width="10" height="25.5" rx="5" fill="#fff" filter="url(#sh)" opacity="0.5"/><rect x="0" y="0" width="10" height="25.5" rx="5" fill="#fff"/><path d="M0.6 7.6H9.4L9.8 14.4H0.2Z" fill="none" stroke="#3f7a3f" stroke-width="1.2"/><path d="M3.5 7.6L3.3 14.4M6.5 7.6L6.7 14.4M0.4 11H9.6M5 14.4V17M3 17.2H7" stroke="#3f7a3f" stroke-width="1" fill="none"/></g>
<g transform="translate(135.0,303.0)"><rect x="0" y="0" width="10" height="25.5" rx="5" fill="#fff" filter="url(#sh)" opacity="0.5"/><rect x="0" y="0" width="10" height="25.5" rx="5" fill="#fff"/><path d="M0.6 7.6H9.4L9.8 14.4H0.2Z" fill="none" stroke="#3f7a3f" stroke-width="1.2"/><path d="M3.5 7.6L3.3 14.4M6.5 7.6L6.7 14.4M0.4 11H9.6M5 14.4V17M3 17.2H7" stroke="#3f7a3f" stroke-width="1" fill="none"/></g>
<g transform="translate(139.0,468.0)"><rect x="0" y="0" width="10" height="25.5" rx="5" fill="#fff" filter="url(#sh)" opacity="0.5"/><rect x="0" y="0" width="10" height="25.5" rx="5" fill="#fff"/><path d="M0.6 7.6H9.4L9.8 14.4H0.2Z" fill="none" stroke="#3f7a3f" stroke-width="1.2"/><path d="M3.5 7.6L3.3 14.4M6.5 7.6L6.7 14.4M0.4 11H9.6M5 14.4V17M3 17.2H7" stroke="#3f7a3f" stroke-width="1" fill="none"/></g>
<g transform="translate(215.0,506.0)"><rect x="0" y="0" width="10" height="25.5" rx="5" fill="#fff" filter="url(#sh)" opacity="0.5"/><rect x="0" y="0" width="10" height="25.5" rx="5" fill="#fff"/><path d="M0.6 7.6H9.4L9.8 14.4H0.2Z" fill="none" stroke="#e3a11e" stroke-width="1.2"/><path d="M3.5 7.6L3.3 14.4M6.5 7.6L6.7 14.4M0.4 11H9.6M5 14.4V17M3 17.2H7" stroke="#e3a11e" stroke-width="1" fill="none"/></g>
<g transform="translate(14.7,600.4)">
<rect x="0" y="0" width="200" height="34.6" rx="6" fill="#fff" filter="url(#sh)" opacity="0.4"/>
<rect x="0" y="0" width="200" height="34.6" rx="6" fill="#fff"/>
<circle cx="23.8" cy="17.1" r="11" fill="#fff" stroke="#d4d4d4" stroke-width="0.8"/>
<path d="M23.8 9.2L27.3 16.4H20.3Z" fill="#e33"/><rect x="21.2" y="17.2" width="5.2" height="6.8" fill="#111"/><path d="M22.3 23V18.3L25.3 23V18.3" stroke="#fff" stroke-width="0.8" fill="none"/>
<rect x="45.6" y="7.1" width="20.3" height="20.3" rx="2" fill="#fff" stroke="#cfcfcf" stroke-width="1"/>
<path d="M49.5 17.25H61.7M55.6 11.2V23.3" stroke="#222" stroke-width="1.6"/>
<rect x="77.3" y="7.1" width="77.6" height="20.3" rx="2" fill="#fff" stroke="#cfcfcf" stroke-width="1"/>
<text x="84.3" y="21.7" font-family="Liberation Sans" font-size="12.6" fill="#333" textLength="62.6" lengthAdjust="spacingAndGlyphs">Zoom to fit</text>
<rect x="166" y="7.1" width="20.6" height="20.3" rx="2" fill="#fff" stroke="#cfcfcf" stroke-width="1"/>
<path d="M170.3 17.25H182.3" stroke="#222" stroke-width="1.6"/>
</g>
<rect x="0.5" y="0.5" width="415" height="648" fill="none" stroke="#d6d6d6" stroke-width="1"/>
</svg>
</div>
<div id="dark"><div id="dk">
<div class="abs" style="left:27px;top:33px;width:40px;height:882px;background:linear-gradient(90deg,#2f3437 0%,#33383b 55%,#3d4245 100%)"></div>
<div class="abs" style="left:66px;top:33px;width:1.5px;height:52px;background:#e8e8e2"></div>
<svg class="i" style="left:40px;top:50px" width="12" height="20" viewBox="0 0 12 20">
<path d="M0.8 0.3H6V7.6A5.2 5.2 0 0 1 0.8 2.4Z" fill="#f4f4ee"/>
<rect x="6" y="7.3" width="5" height="4.8" fill="#f4f4ee"/>
<path d="M0.8 19.2H6V12A5.2 5.2 0 0 0 0.8 17.2Z" fill="#f4f4ee"/></svg>
<svg class="i" style="left:39px;top:123px" width="14" height="17" viewBox="0 0 14 17">
<path d="M1.5 10.2V7A5.5 5.5 0 0 1 12.5 7V10.2Z" fill="none" stroke="#c9cbc5" stroke-width="1.4"/>
<rect x="2.5" y="11.3" width="9" height="1.6" fill="#c9cbc5"/><rect x="4" y="14" width="6" height="1.5" fill="#c9cbc5"/></svg>
<svg class="i" style="left:40px;top:162px" width="12" height="16" viewBox="0 0 12 16">
<rect x="0" y="0.5" width="12" height="15" rx="2" fill="#ebebe5"/>
<path d="M7 2.8L3.4 8.6H6L5 13.2L8.6 7.2H6Z" fill="#2b2f33"/></svg>
<svg class="i" style="left:38px;top:200px" width="16" height="16" viewBox="0 0 16 16">
<circle cx="8" cy="8" r="6.8" fill="none" stroke="#c9cbc5" stroke-width="1.3"/>
<path d="M5 10L11 6.8" stroke="#c9cbc5" stroke-width="1.5" stroke-linecap="round"/></svg>
<div class="abs" style="left:95px;top:84px;width:620px;height:157px;background:#2b3134;border-radius:11px"></div>
<div class="t" style="left:124.00px;top:132.68px;font-size:25.44px;color:#e9e9e3;font-weight:bold;transform:scaleX(0.8886);transform-origin:0 0;">All Farms</div>
<div class="abs" style="left:123px;top:179px;width:399px;height:42px;background:#3a3e46;border:1px solid #4a4e55;border-radius:7px"></div>
<svg class="i" style="left:137px;top:192px" width="16" height="16" viewBox="0 0 16 16">
<circle cx="7" cy="7" r="5.6" fill="none" stroke="#c9cbc5" stroke-width="1.4"/><path d="M11 11L14.2 14.2" stroke="#c9cbc5" stroke-width="1.5"/></svg>
<div class="t" style="left:162.00px;top:200.41px;font-size:14.97px;color:#a7a9a4;transform:scaleX(0.9112);transform-origin:0 0;">Search for farm</div>
<div class="t" style="left:536.60px;top:186.02px;font-size:9.74px;color:#a9aba6;font-weight:bold;transform:scaleX(0.8638);transform-origin:0 0;">STATUS</div>
<div class="abs" style="left:536px;top:196px;width:59px;height:25px;background:#5a3659;border-radius:5px"></div>
<div class="t" style="left:543.00px;top:207.97px;font-size:11.63px;color:#ebb3ed;font-weight:bold;transform:scaleX(0.8959);transform-origin:0 0;">2 Critical</div>
<div class="abs" style="left:602px;top:196px;width:60px;height:25px;background:#5c3636;border-radius:5px"></div>
<div class="t" style="left:608.70px;top:207.97px;font-size:11.63px;color:#f2b1ad;font-weight:bold;transform:scaleX(0.8520);transform-origin:0 0;">15 Error</div>
<div class="abs" style="left:95px;top:263px;width:123px;height:35px;background:#c9cbc4;border-radius:8px"></div>
<div class="t" style="left:116.00px;top:279.97px;font-size:11.63px;color:#2b2d2b;font-weight:bold;transform:scaleX(0.8789);transform-origin:0 0;">All Technologies</div>
<svg class="i" style="left:241.0px;top:274.0px" width="15" height="13" viewBox="0 0 15 13"><path d="M1.2 4.9H8.6A2.6 2.6 0 1 0 6 2.3M1.2 8H11.6A2.7 2.7 0 1 1 8.9 10.7" fill="none" stroke="#a5a7a2" stroke-width="1.4" stroke-linecap="round"/></svg>
<div class="t" style="left:262.00px;top:279.87px;font-size:11.92px;color:#a5a7a2;font-weight:bold;transform:scaleX(0.8752);transform-origin:0 0;">Wind Farms</div>
<svg class="i" style="left:365px;top:272px" width="17" height="17" viewBox="0 0 17 17">
<circle cx="8.5" cy="8.5" r="4.2" fill="none" stroke="#a5a7a2" stroke-width="1.4"/>
<path d="M8.5 0.8V3M8.5 14V16.2M0.8 8.5H3M14 8.5H16.2M3 3L4.6 4.6M12.4 12.4L14 14M3 14L4.6 12.4M12.4 4.6L14 3" stroke="#a5a7a2" stroke-width="1.4"/></svg>
<div class="t" style="left:387.40px;top:279.87px;font-size:11.92px;color:#a5a7a2;font-weight:bold;transform:scaleX(0.8709);transform-origin:0 0;">Solar Farms</div>
<div class="abs" style="left:95px;top:312px;width:620px;height:51px;background:#1e2226;border-radius:8px"></div>
<div class="t" style="left:389.50px;top:327.97px;font-size:10.17px;color:#a5a7a2;font-weight:bold;transform:scaleX(0.8055);transform-origin:0 0;">PERFORMANCE</div>
<div class="t" style="left:613.50px;top:327.97px;font-size:10.17px;color:#a5a7a2;font-weight:bold;transform:scaleX(0.8402);transform-origin:0 0;">ENERGY LOSSES</div>
<svg class="i" style="left:103.0px;top:343.5px" width="12" height="11" viewBox="0 0 12 11"><path d="M3 10.5V1M0.6 3.4L3 1L5.4 3.4M9 0.5V10M6.6 7.6L9 10L11.4 7.6" fill="none" stroke="#a5a7a2" stroke-width="1.5"/></svg>
<div class="t" style="left:119.60px;top:348.97px;font-size:10.17px;color:#a5a7a2;font-weight:bold;transform:scaleX(0.8278);transform-origin:0 0;">NAME</div>
<svg class="i" style="left:292.0px;top:343.5px" width="12" height="11" viewBox="0 0 12 11"><path d="M3 10.5V1M0.6 3.4L3 1L5.4 3.4M9 0.5V10M6.6 7.6L9 10L11.4 7.6" fill="none" stroke="#a5a7a2" stroke-width="1.5"/></svg>
<div class="t" style="left:308.80px;top:348.97px;font-size:10.17px;color:#a5a7a2;font-weight:bold;transform:scaleX(0.8370);transform-origin:0 0;">STATUS</div>
<svg class="i" style="left:390.6px;top:343.5px" width="12" height="11" viewBox="0 0 12 11"><path d="M3 10.5V1M0.6 3.4L3 1L5.4 3.4M9 0.5V10M6.6 7.6L9 10L11.4 7.6" fill="none" stroke="#a5a7a2" stroke-width="1.5"/></svg>
<div class="t" style="left:407.00px;top:348.97px;font-size:10.17px;color:#a5a7a2;font-weight:bold;transform:scaleX(0.8176);transform-origin:0 0;">DAY</div>
<svg class="i" style="left:461.0px;top:343.5px" width="12" height="11" viewBox="0 0 12 11"><path d="M3 10.5V1M0.6 3.4L3 1L5.4 3.4M9 0.5V10M6.6 7.6L9 10L11.4 7.6" fill="none" stroke="#a5a7a2" stroke-width="1.5"/></svg>
<div class="t" style="left:476.80px;top:348.97px;font-size:10.17px;color:#a5a7a2;font-weight:bold;transform:scaleX(0.8059);transform-origin:0 0;">WEEK</div>
<svg class="i" style="left:530.8px;top:343.5px" width="12" height="11" viewBox="0 0 12 11"><path d="M3 10.5V1M0.6 3.4L3 1L5.4 3.4M9 0.5V10M6.6 7.6L9 10L11.4 7.6" fill="none" stroke="#a5a7a2" stroke-width="1.5"/></svg>
<div class="t" style="left:547.00px;top:348.97px;font-size:10.17px;color:#a5a7a2;font-weight:bold;transform:scaleX(0.8177);transform-origin:0 0;">MONTH</div>
<svg class="i" style="left:615.0px;top:343.5px" width="12" height="11" viewBox="0 0 12 11"><path d="M3 10.5V1M0.6 3.4L3 1L5.4 3.4M9 0.5V10M6.6 7.6L9 10L11.4 7.6" fill="none" stroke="#a5a7a2" stroke-width="1.5"/></svg>
<div class="t" style="left:631.00px;top:348.97px;font-size:10.17px;color:#a5a7a2;font-weight:bold;transform:scaleX(0.8177);transform-origin:0 0;">MONTH</div>
<svg class="i" style="left:103.0px;top:375.5px" width="15" height="13" viewBox="0 0 15 13"><path d="M1.2 4.9H8.6A2.6 2.6 0 1 0 6 2.3M1.2 8H11.6A2.7 2.7 0 1 1 8.9 10.7" fill="none" stroke="#dcdcd6" stroke-width="1.4" stroke-linecap="round"/></svg>
<div class="t" style="left:123.40px;top:381.91px;font-size:13.81px;color:#e6e6e0;font-weight:bold;transform:scaleX(0.8335);transform-origin:0 0;">Capucha</div>
<div class="t" style="left:102.60px;top:399.72px;font-size:12.35px;color:#a3a59f;transform:scaleX(0.8818);transform-origin:0 0;">15 sec ago</div>
<div class="abs" style="left:291px;top:373.2px;width:44px;height:17px;background:#4a3a2f;border-radius:4px"></div>
<div class="t" style="left:294.50px;top:382.17px;font-size:10.47px;color:#f2a95e;font-weight:bold;transform:scaleX(0.8923);transform-origin:0 0;">Warning</div>
<svg class="i" style="left:390.6px;top:375.5px" width="12" height="13" viewBox="0 0 12 13"><path d="M6 0.8L11 2.6V6.5C11 9.2 8.8 11.2 6 12.2C3.2 11.2 1 9.2 1 6.5V2.6Z" fill="none" stroke="#76c787" stroke-width="1.2" stroke-linejoin="round"/><path d="M3.3 6.3L5.1 8L8.3 4.6" fill="none" stroke="#76c787" stroke-width="1.2"/></svg>
<div class="t" style="left:407.00px;top:381.61px;font-size:13.81px;color:#76c787;transform:scaleX(0.8295);transform-origin:0 0;">99.87%</div>
<svg class="i" style="left:461.0px;top:375.5px" width="12" height="13" viewBox="0 0 12 13"><path d="M6 0.8L11 2.6V6.5C11 9.2 8.8 11.2 6 12.2C3.2 11.2 1 9.2 1 6.5V2.6Z" fill="none" stroke="#e69a98" stroke-width="1.2" stroke-linejoin="round"/><path d="M4.3 4.8L7.3 7.8M7.3 4.8L4.3 7.8" fill="none" stroke="#e69a98" stroke-width="1.2"/></svg>
<div class="t" style="left:477.00px;top:381.61px;font-size:13.81px;color:#e69a98;transform:scaleX(0.8295);transform-origin:0 0;">66.48%</div>
<svg class="i" style="left:530.8px;top:375.5px" width="12" height="13" viewBox="0 0 12 13"><path d="M6 0.8L11 2.6V6.5C11 9.2 8.8 11.2 6 12.2C3.2 11.2 1 9.2 1 6.5V2.6Z" fill="none" stroke="#e69a98" stroke-width="1.2" stroke-linejoin="round"/><path d="M4.3 4.8L7.3 7.8M7.3 4.8L4.3 7.8" fill="none" stroke="#e69a98" stroke-width="1.2"/></svg>
<div class="t" style="left:547.00px;top:381.61px;font-size:13.81px;color:#76c787;transform:scaleX(0.8295);transform-origin:0 0;">99.87%</div>
<div class="t" style="left:613.50px;top:381.61px;font-size:13.81px;color:#b9bbb6;transform:scaleX(0.8817);transform-origin:0 0;">8 kWh</div>
<div class="abs" style="left:95px;top:419.6px;width:620px;height:55.5px;background:#262b31;border-radius:7px"></div>
<svg class="i" style="left:103.0px;top:433.3px" width="15" height="13" viewBox="0 0 15 13"><path d="M1.2 4.9H8.6A2.6 2.6 0 1 0 6 2.3M1.2 8H11.6A2.7 2.7 0 1 1 8.9 10.7" fill="none" stroke="#dcdcd6" stroke-width="1.4" stroke-linecap="round"/></svg>
<div class="t" style="left:123.40px;top:439.71px;font-size:13.81px;color:#e6e6e0;font-weight:bold;transform:scaleX(0.8582);transform-origin:0 0;">Villa Franca Xira</div>
<div class="t" style="left:102.60px;top:457.52px;font-size:12.35px;color:#a3a59f;transform:scaleX(0.8818);transform-origin:0 0;">15 sec ago</div>
<div class="abs" style="left:291px;top:431.0px;width:30px;height:17px;background:#2e3e33;border-radius:4px"></div>
<div class="t" style="left:294.50px;top:439.97px;font-size:10.47px;color:#7fd087;font-weight:bold;transform:scaleX(0.8420);transform-origin:0 0;">Good</div>
<svg class="i" style="left:390.6px;top:433.3px" width="12" height="13" viewBox="0 0 12 13"><path d="M6 0.8L11 2.6V6.5C11 9.2 8.8 11.2 6 12.2C3.2 11.2 1 9.2 1 6.5V2.6Z" fill="none" stroke="#76c787" stroke-width="1.2" stroke-linejoin="round"/><path d="M3.3 6.3L5.1 8L8.3 4.6" fill="none" stroke="#76c787" stroke-width="1.2"/></svg>
<div class="t" style="left:407.00px;top:439.41px;font-size:13.81px;color:#76c787;transform:scaleX(0.8295);transform-origin:0 0;">99.87%</div>
<svg class="i" style="left:461.0px;top:433.3px" width="12" height="13" viewBox="0 0 12 13"><path d="M6 0.8L11 2.6V6.5C11 9.2 8.8 11.2 6 12.2C3.2 11.2 1 9.2 1 6.5V2.6Z" fill="none" stroke="#76c787" stroke-width="1.2" stroke-linejoin="round"/><path d="M3.3 6.3L5.1 8L8.3 4.6" fill="none" stroke="#76c787" stroke-width="1.2"/></svg>
<div class="t" style="left:477.00px;top:439.41px;font-size:13.81px;color:#76c787;transform:scaleX(0.8295);transform-origin:0 0;">97.86%</div>
<svg class="i" style="left:530.8px;top:433.3px" width="12" height="13" viewBox="0 0 12 13"><path d="M6 0.8L11 2.6V6.5C11 9.2 8.8 11.2 6 12.2C3.2 11.2 1 9.2 1 6.5V2.6Z" fill="none" stroke="#76c787" stroke-width="1.2" stroke-linejoin="round"/><path d="M3.3 6.3L5.1 8L8.3 4.6" fill="none" stroke="#76c787" stroke-width="1.2"/></svg>
<div class="t" style="left:547.00px;top:439.41px;font-size:13.81px;color:#76c787;transform:scaleX(0.8295);transform-origin:0 0;">99.87%</div>
<div class="t" style="left:613.50px;top:439.41px;font-size:13.81px;color:#b9bbb6;transform:scaleX(0.8817);transform-origin:0 0;">8 kWh</div>
<svg class="i" style="left:103.0px;top:491.1px" width="15" height="13" viewBox="0 0 15 13"><path d="M1.2 4.9H8.6A2.6 2.6 0 1 0 6 2.3M1.2 8H11.6A2.7 2.7 0 1 1 8.9 10.7" fill="none" stroke="#dcdcd6" stroke-width="1.4" stroke-linecap="round"/></svg>
<div class="t" style="left:123.40px;top:497.51px;font-size:13.81px;color:#e6e6e0;font-weight:bold;transform:scaleX(0.8582);transform-origin:0 0;">Villa Franca Xira</div>
<div class="t" style="left:102.60px;top:515.32px;font-size:12.35px;color:#a3a59f;transform:scaleX(0.8818);transform-origin:0 0;">15 sec ago</div>
<div class="abs" style="left:291px;top:488.8px;width:44px;height:17px;background:#4a3a2f;border-radius:4px"></div>
<div class="t" style="left:294.50px;top:497.77px;font-size:10.47px;color:#f2a95e;font-weight:bold;transform:scaleX(0.8923);transform-origin:0 0;">Warning</div>
<svg class="i" style="left:390.6px;top:491.1px" width="12" height="13" viewBox="0 0 12 13"><path d="M6 0.8L11 2.6V6.5C11 9.2 8.8 11.2 6 12.2C3.2 11.2 1 9.2 1 6.5V2.6Z" fill="none" stroke="#e69a98" stroke-width="1.2" stroke-linejoin="round"/><path d="M4.3 4.8L7.3 7.8M7.3 4.8L4.3 7.8" fill="none" stroke="#e69a98" stroke-width="1.2"/></svg>
<div class="t" style="left:407.00px;top:497.21px;font-size:13.81px;color:#76c787;transform:scaleX(0.8295);transform-origin:0 0;">99.87%</div>
<svg class="i" style="left:461.0px;top:491.1px" width="12" height="13" viewBox="0 0 12 13"><path d="M6 0.8L11 2.6V6.5C11 9.2 8.8 11.2 6 12.2C3.2 11.2 1 9.2 1 6.5V2.6Z" fill="none" stroke="#e69a98" stroke-width="1.2" stroke-linejoin="round"/><path d="M4.3 4.8L7.3 7.8M7.3 4.8L4.3 7.8" fill="none" stroke="#e69a98" stroke-width="1.2"/></svg>
<div class="t" style="left:477.00px;top:497.21px;font-size:13.81px;color:#76c787;transform:scaleX(0.8295);transform-origin:0 0;">97.86%</div>
<svg class="i" style="left:530.8px;top:491.1px" width="12" height="13" viewBox="0 0 12 13"><path d="M6 0.8L11 2.6V6.5C11 9.2 8.8 11.2 6 12.2C3.2 11.2 1 9.2 1 6.5V2.6Z" fill="none" stroke="#e69a98" stroke-width="1.2" stroke-linejoin="round"/><path d="M4.3 4.8L7.3 7.8M7.3 4.8L4.3 7.8" fill="none" stroke="#e69a98" stroke-width="1.2"/></svg>
<div class="t" style="left:547.00px;top:497.21px;font-size:13.81px;color:#76c787;transform:scaleX(0.8295);transform-origin:0 0;">99.87%</div>
<div class="t" style="left:613.50px;top:497.21px;font-size:13.81px;color:#b9bbb6;transform:scaleX(0.8817);transform-origin:0 0;">8 kWh</div>
<div class="abs" style="left:95px;top:535.2px;width:620px;height:55.5px;background:#262b31;border-radius:7px"></div>
<svg class="i" style="left:103.0px;top:548.9px" width="15" height="13" viewBox="0 0 15 13"><path d="M1.2 4.9H8.6A2.6 2.6 0 1 0 6 2.3M1.2 8H11.6A2.7 2.7 0 1 1 8.9 10.7" fill="none" stroke="#dcdcd6" stroke-width="1.4" stroke-linecap="round"/></svg>
<div class="t" style="left:123.40px;top:555.31px;font-size:13.81px;color:#e6e6e0;font-weight:bold;transform:scaleX(0.8582);transform-origin:0 0;">Villa Franca Xira</div>
<div class="t" style="left:102.60px;top:573.12px;font-size:12.35px;color:#a3a59f;transform:scaleX(0.8818);transform-origin:0 0;">15 sec ago</div>
<div class="abs" style="left:291px;top:546.6px;width:29px;height:17px;background:#5a3434;border-radius:4px"></div>
<div class="t" style="left:294.50px;top:555.57px;font-size:10.47px;color:#f1aba6;font-weight:bold;transform:scaleX(0.8596);transform-origin:0 0;">Error</div>
<svg class="i" style="left:390.6px;top:548.9px" width="12" height="13" viewBox="0 0 12 13"><path d="M6 0.8L11 2.6V6.5C11 9.2 8.8 11.2 6 12.2C3.2 11.2 1 9.2 1 6.5V2.6Z" fill="none" stroke="#e69a98" stroke-width="1.2" stroke-linejoin="round"/><path d="M4.3 4.8L7.3 7.8M7.3 4.8L4.3 7.8" fill="none" stroke="#e69a98" stroke-width="1.2"/></svg>
<div class="t" style="left:407.00px;top:555.01px;font-size:13.81px;color:#e69a98;transform:scaleX(0.8295);transform-origin:0 0;">45.48%</div>
<svg class="i" style="left:461.0px;top:548.9px" width="12" height="13" viewBox="0 0 12 13"><path d="M6 0.8L11 2.6V6.5C11 9.2 8.8 11.2 6 12.2C3.2 11.2 1 9.2 1 6.5V2.6Z" fill="none" stroke="#e69a98" stroke-width="1.2" stroke-linejoin="round"/><path d="M4.3 4.8L7.3 7.8M7.3 4.8L4.3 7.8" fill="none" stroke="#e69a98" stroke-width="1.2"/></svg>
<div class="t" style="left:477.00px;top:555.01px;font-size:13.81px;color:#76c787;transform:scaleX(0.8295);transform-origin:0 0;">97.86%</div>
<svg class="i" style="left:530.8px;top:548.9px" width="12" height="13" viewBox="0 0 12 13"><path d="M6 0.8L11 2.6V6.5C11 9.2 8.8 11.2 6 12.2C3.2 11.2 1 9.2 1 6.5V2.6Z" fill="none" stroke="#e69a98" stroke-width="1.2" stroke-linejoin="round"/><path d="M4.3 4.8L7.3 7.8M7.3 4.8L4.3 7.8" fill="none" stroke="#e69a98" stroke-width="1.2"/></svg>
<div class="t" style="left:547.00px;top:555.01px;font-size:13.81px;color:#76c787;transform:scaleX(0.8295);transform-origin:0 0;">99.87%</div>
<div class="t" style="left:613.50px;top:555.01px;font-size:13.81px;color:#b9bbb6;transform:scaleX(0.8817);transform-origin:0 0;">8 kWh</div>
<svg class="i" style="left:103.0px;top:606.7px" width="15" height="13" viewBox="0 0 15 13"><path d="M1.2 4.9H8.6A2.6 2.6 0 1 0 6 2.3M1.2 8H11.6A2.7 2.7 0 1 1 8.9 10.7" fill="none" stroke="#dcdcd6" stroke-width="1.4" stroke-linecap="round"/></svg>
<div class="t" style="left:123.40px;top:613.11px;font-size:13.81px;color:#e6e6e0;font-weight:bold;transform:scaleX(0.8582);transform-origin:0 0;">Villa Franca Xira</div>
<div class="t" style="left:102.60px;top:630.92px;font-size:12.35px;color:#a3a59f;transform:scaleX(0.8818);transform-origin:0 0;">15 sec ago</div>
<div class="abs" style="left:291px;top:604.4px;width:30px;height:17px;background:#2e3e33;border-radius:4px"></div>
<div class="t" style="left:294.50px;top:613.37px;font-size:10.47px;color:#7fd087;font-weight:bold;transform:scaleX(0.8420);transform-origin:0 0;">Good</div>
<svg class="i" style="left:390.6px;top:606.7px" width="12" height="13" viewBox="0 0 12 13"><path d="M6 0.8L11 2.6V6.5C11 9.2 8.8 11.2 6 12.2C3.2 11.2 1 9.2 1 6.5V2.6Z" fill="none" stroke="#76c787" stroke-width="1.2" stroke-linejoin="round"/><path d="M3.3 6.3L5.1 8L8.3 4.6" fill="none" stroke="#76c787" stroke-width="1.2"/></svg>
<div class="t" style="left:407.00px;top:612.81px;font-size:13.81px;color:#76c787;transform:scaleX(0.8295);transform-origin:0 0;">99.87%</div>
<svg class="i" style="left:461.0px;top:606.7px" width="12" height="13" viewBox="0 0 12 13"><path d="M6 0.8L11 2.6V6.5C11 9.2 8.8 11.2 6 12.2C3.2 11.2 1 9.2 1 6.5V2.6Z" fill="none" stroke="#76c787" stroke-width="1.2" stroke-linejoin="round"/><path d="M3.3 6.3L5.1 8L8.3 4.6" fill="none" stroke="#76c787" stroke-width="1.2"/></svg>
<div class="t" style="left:477.00px;top:612.81px;font-size:13.81px;color:#76c787;transform:scaleX(0.8295);transform-origin:0 0;">93.86%</div>
<svg class="i" style="left:530.8px;top:606.7px" width="12" height="13" viewBox="0 0 12 13"><path d="M6 0.8L11 2.6V6.5C11 9.2 8.8 11.2 6 12.2C3.2 11.2 1 9.2 1 6.5V2.6Z" fill="none" stroke="#76c787" stroke-width="1.2" stroke-linejoin="round"/><path d="M3.3 6.3L5.1 8L8.3 4.6" fill="none" stroke="#76c787" stroke-width="1.2"/></svg>
<div class="t" style="left:547.00px;top:612.81px;font-size:13.81px;color:#76c787;transform:scaleX(0.8295);transform-origin:0 0;">99.87%</div>
<div class="t" style="left:613.50px;top:612.81px;font-size:13.81px;color:#b9bbb6;transform:scaleX(0.8817);transform-origin:0 0;">8 kWh</div>
<div class="abs" style="left:95px;top:650.8px;width:620px;height:55.5px;background:#262b31;border-radius:7px"></div>
<svg class="i" style="left:103.0px;top:664.5px" width="15" height="13" viewBox="0 0 15 13"><path d="M1.2 4.9H8.6A2.6 2.6 0 1 0 6 2.3M1.2 8H11.6A2.7 2.7 0 1 1 8.9 10.7" fill="none" stroke="#dcdcd6" stroke-width="1.4" stroke-linecap="round"/></svg>
<div class="t" style="left:123.40px;top:670.91px;font-size:13.81px;color:#e6e6e0;font-weight:bold;transform:scaleX(0.8582);transform-origin:0 0;">Villa Franca Xira</div>
<div class="t" style="left:102.60px;top:688.72px;font-size:12.35px;color:#a3a59f;transform:scaleX(0.8818);transform-origin:0 0;">15 sec ago</div>
<div class="abs" style="left:291px;top:662.2px;width:38px;height:17px;background:#56385a;border-radius:4px"></div>
<div class="t" style="left:294.50px;top:671.17px;font-size:10.47px;color:#e2a8e8;font-weight:bold;transform:scaleX(0.8738);transform-origin:0 0;">Critical</div>
<svg class="i" style="left:390.6px;top:664.5px" width="12" height="13" viewBox="0 0 12 13"><path d="M6 0.8L11 2.6V6.5C11 9.2 8.8 11.2 6 12.2C3.2 11.2 1 9.2 1 6.5V2.6Z" fill="none" stroke="#e69a98" stroke-width="1.2" stroke-linejoin="round"/><path d="M4.3 4.8L7.3 7.8M7.3 4.8L4.3 7.8" fill="none" stroke="#e69a98" stroke-width="1.2"/></svg>
<div class="t" style="left:407.00px;top:670.61px;font-size:13.81px;color:#e69a98;transform:scaleX(0.8295);transform-origin:0 0;">45.48%</div>
<svg class="i" style="left:461.0px;top:664.5px" width="12" height="13" viewBox="0 0 12 13"><path d="M6 0.8L11 2.6V6.5C11 9.2 8.8 11.2 6 12.2C3.2 11.2 1 9.2 1 6.5V2.6Z" fill="none" stroke="#e69a98" stroke-width="1.2" stroke-linejoin="round"/><path d="M4.3 4.8L7.3 7.8M7.3 4.8L4.3 7.8" fill="none" stroke="#e69a98" stroke-width="1.2"/></svg>
<div class="t" style="left:477.00px;top:670.61px;font-size:13.81px;color:#e69a98;transform:scaleX(0.8295);transform-origin:0 0;">45.48%</div>
<svg class="i" style="left:530.8px;top:664.5px" width="12" height="13" viewBox="0 0 12 13"><path d="M6 0.8L11 2.6V6.5C11 9.2 8.8 11.2 6 12.2C3.2 11.2 1 9.2 1 6.5V2.6Z" fill="none" stroke="#e69a98" stroke-width="1.2" stroke-linejoin="round"/><path d="M4.3 4.8L7.3 7.8M7.3 4.8L4.3 7.8" fill="none" stroke="#e69a98" stroke-width="1.2"/></svg>
<div class="t" style="left:547.00px;top:670.61px;font-size:13.81px;color:#e69a98;transform:scaleX(0.8295);transform-origin:0 0;">40.48%</div>
<div class="t" style="left:613.50px;top:670.61px;font-size:13.81px;color:#b9bbb6;transform:scaleX(0.8817);transform-origin:0 0;">8 kWh</div>
<svg class="i" style="left:103.0px;top:722.3px" width="15" height="13" viewBox="0 0 15 13"><path d="M1.2 4.9H8.6A2.6 2.6 0 1 0 6 2.3M1.2 8H11.6A2.7 2.7 0 1 1 8.9 10.7" fill="none" stroke="#dcdcd6" stroke-width="1.4" stroke-linecap="round"/></svg>
<div class="t" style="left:123.40px;top:728.71px;font-size:13.81px;color:#e6e6e0;font-weight:bold;transform:scaleX(0.8582);transform-origin:0 0;">Villa Franca Xira</div>
<div class="t" style="left:102.60px;top:746.52px;font-size:12.35px;color:#a3a59f;transform:scaleX(0.8818);transform-origin:0 0;">15 sec ago</div>
<div class="abs" style="left:291px;top:720.0px;width:30px;height:17px;background:#2e3e33;border-radius:4px"></div>
<div class="t" style="left:294.50px;top:728.97px;font-size:10.47px;color:#7fd087;font-weight:bold;transform:scaleX(0.8420);transform-origin:0 0;">Good</div>
<svg class="i" style="left:390.6px;top:722.3px" width="12" height="13" viewBox="0 0 12 13"><path d="M6 0.8L11 2.6V6.5C11 9.2 8.8 11.2 6 12.2C3.2 11.2 1 9.2 1 6.5V2.6Z" fill="none" stroke="#76c787" stroke-width="1.2" stroke-linejoin="round"/><path d="M3.3 6.3L5.1 8L8.3 4.6" fill="none" stroke="#76c787" stroke-width="1.2"/></svg>
<div class="t" style="left:407.00px;top:728.41px;font-size:13.81px;color:#76c787;transform:scaleX(0.8295);transform-origin:0 0;">99.87%</div>
<svg class="i" style="left:461.0px;top:722.3px" width="12" height="13" viewBox="0 0 12 13"><path d="M6 0.8L11 2.6V6.5C11 9.2 8.8 11.2 6 12.2C3.2 11.2 1 9.2 1 6.5V2.6Z" fill="none" stroke="#76c787" stroke-width="1.2" stroke-linejoin="round"/><path d="M3.3 6.3L5.1 8L8.3 4.6" fill="none" stroke="#76c787" stroke-width="1.2"/></svg>
<div class="t" style="left:477.00px;top:728.41px;font-size:13.81px;color:#76c787;transform:scaleX(0.8295);transform-origin:0 0;">97.86%</div>
<svg class="i" style="left:530.8px;top:722.3px" width="12" height="13" viewBox="0 0 12 13"><path d="M6 0.8L11 2.6V6.5C11 9.2 8.8 11.2 6 12.2C3.2 11.2 1 9.2 1 6.5V2.6Z" fill="none" stroke="#76c787" stroke-width="1.2" stroke-linejoin="round"/><path d="M3.3 6.3L5.1 8L8.3 4.6" fill="none" stroke="#76c787" stroke-width="1.2"/></svg>
<div class="t" style="left:547.00px;top:728.41px;font-size:13.81px;color:#76c787;transform:scaleX(0.8295);transform-origin:0 0;">99.87%</div>
<div class="t" style="left:613.50px;top:728.41px;font-size:13.81px;color:#b9bbb6;transform:scaleX(0.8817);transform-origin:0 0;">8 kWh</div>
<div class="abs" style="left:95px;top:766.4px;width:620px;height:55.5px;background:#262b31;border-radius:7px"></div>
<svg class="i" style="left:103.0px;top:780.1px" width="15" height="13" viewBox="0 0 15 13"><path d="M1.2 4.9H8.6A2.6 2.6 0 1 0 6 2.3M1.2 8H11.6A2.7 2.7 0 1 1 8.9 10.7" fill="none" stroke="#dcdcd6" stroke-width="1.4" stroke-linecap="round"/></svg>
<div class="t" style="left:123.40px;top:786.51px;font-size:13.81px;color:#e6e6e0;font-weight:bold;transform:scaleX(0.8582);transform-origin:0 0;">Villa Franca Xira</div>
<div class="t" style="left:102.60px;top:804.32px;font-size:12.35px;color:#a3a59f;transform:scaleX(0.8818);transform-origin:0 0;">15 sec ago</div>
<div class="abs" style="left:291px;top:777.8px;width:30px;height:17px;background:#2e3e33;border-radius:4px"></div>
<div class="t" style="left:294.50px;top:786.77px;font-size:10.47px;color:#7fd087;font-weight:bold;transform:scaleX(0.8420);transform-origin:0 0;">Good</div>
<svg class="i" style="left:390.6px;top:780.1px" width="12" height="13" viewBox="0 0 12 13"><path d="M6 0.8L11 2.6V6.5C11 9.2 8.8 11.2 6 12.2C3.2 11.2 1 9.2 1 6.5V2.6Z" fill="none" stroke="#76c787" stroke-width="1.2" stroke-linejoin="round"/><path d="M3.3 6.3L5.1 8L8.3 4.6" fill="none" stroke="#76c787" stroke-width="1.2"/></svg>
<div class="t" style="left:407.00px;top:786.21px;font-size:13.81px;color:#76c787;transform:scaleX(0.8295);transform-origin:0 0;">99.87%</div>
<svg class="i" style="left:461.0px;top:780.1px" width="12" height="13" viewBox="0 0 12 13"><path d="M6 0.8L11 2.6V6.5C11 9.2 8.8 11.2 6 12.2C3.2 11.2 1 9.2 1 6.5V2.6Z" fill="none" stroke="#76c787" stroke-width="1.2" stroke-linejoin="round"/><path d="M3.3 6.3L5.1 8L8.3 4.6" fill="none" stroke="#76c787" stroke-width="1.2"/></svg>
<div class="t" style="left:477.00px;top:786.21px;font-size:13.81px;color:#76c787;transform:scaleX(0.8295);transform-origin:0 0;">97.86%</div>
<svg class="i" style="left:530.8px;top:780.1px" width="12" height="13" viewBox="0 0 12 13"><path d="M6 0.8L11 2.6V6.5C11 9.2 8.8 11.2 6 12.2C3.2 11.2 1 9.2 1 6.5V2.6Z" fill="none" stroke="#76c787" stroke-width="1.2" stroke-linejoin="round"/><path d="M3.3 6.3L5.1 8L8.3 4.6" fill="none" stroke="#76c787" stroke-width="1.2"/></svg>
<div class="t" style="left:547.00px;top:786.21px;font-size:13.81px;color:#76c787;transform:scaleX(0.8295);transform-origin:0 0;">99.87%</div>
<div class="t" style="left:613.50px;top:786.21px;font-size:13.81px;color:#b9bbb6;transform:scaleX(0.8817);transform-origin:0 0;">8 kWh</div>
<svg class="i" style="left:103.0px;top:837.9px" width="15" height="13" viewBox="0 0 15 13"><path d="M1.2 4.9H8.6A2.6 2.6 0 1 0 6 2.3M1.2 8H11.6A2.7 2.7 0 1 1 8.9 10.7" fill="none" stroke="#dcdcd6" stroke-width="1.4" stroke-linecap="round"/></svg>
<div class="t" style="left:123.40px;top:844.31px;font-size:13.81px;color:#e6e6e0;font-weight:bold;transform:scaleX(0.8582);transform-origin:0 0;">Villa Franca Xira</div>
<div class="t" style="left:102.60px;top:862.12px;font-size:12.35px;color:#a3a59f;transform:scaleX(0.8818);transform-origin:0 0;">15 sec ago</div>
<div class="abs" style="left:291px;top:835.6px;width:29px;height:17px;background:#5a3434;border-radius:4px"></div>
<div class="t" style="left:294.50px;top:844.57px;font-size:10.47px;color:#f1aba6;font-weight:bold;transform:scaleX(0.8596);transform-origin:0 0;">Error</div>
<svg class="i" style="left:390.6px;top:837.9px" width="12" height="13" viewBox="0 0 12 13"><path d="M6 0.8L11 2.6V6.5C11 9.2 8.8 11.2 6 12.2C3.2 11.2 1 9.2 1 6.5V2.6Z" fill="none" stroke="#e69a98" stroke-width="1.2" stroke-linejoin="round"/><path d="M4.3 4.8L7.3 7.8M7.3 4.8L4.3 7.8" fill="none" stroke="#e69a98" stroke-width="1.2"/></svg>
<div class="t" style="left:407.00px;top:844.01px;font-size:13.81px;color:#e69a98;transform:scaleX(0.8295);transform-origin:0 0;">12.46%</div>
<svg class="i" style="left:461.0px;top:837.9px" width="12" height="13" viewBox="0 0 12 13"><path d="M6 0.8L11 2.6V6.5C11 9.2 8.8 11.2 6 12.2C3.2 11.2 1 9.2 1 6.5V2.6Z" fill="none" stroke="#76c787" stroke-width="1.2" stroke-linejoin="round"/><path d="M3.3 6.3L5.1 8L8.3 4.6" fill="none" stroke="#76c787" stroke-width="1.2"/></svg>
<div class="t" style="left:477.00px;top:844.01px;font-size:13.81px;color:#76c787;transform:scaleX(0.8295);transform-origin:0 0;">97.86%</div>
<svg class="i" style="left:530.8px;top:837.9px" width="12" height="13" viewBox="0 0 12 13"><path d="M6 0.8L11 2.6V6.5C11 9.2 8.8 11.2 6 12.2C3.2 11.2 1 9.2 1 6.5V2.6Z" fill="none" stroke="#76c787" stroke-width="1.2" stroke-linejoin="round"/><path d="M3.3 6.3L5.1 8L8.3 4.6" fill="none" stroke="#76c787" stroke-width="1.2"/></svg>
<div class="t" style="left:547.00px;top:844.01px;font-size:13.81px;color:#76c787;transform:scaleX(0.8295);transform-origin:0 0;">99.87%</div>
<div class="t" style="left:613.50px;top:844.01px;font-size:13.81px;color:#b9bbb6;transform:scaleX(0.8817);transform-origin:0 0;">8 kWh</div>
<div class="abs" style="left:95px;top:882.0px;width:620px;height:55.5px;background:#262b31;border-radius:7px"></div>
<svg class="i" style="left:103.0px;top:895.7px" width="15" height="13" viewBox="0 0 15 13"><path d="M1.2 4.9H8.6A2.6 2.6 0 1 0 6 2.3M1.2 8H11.6A2.7 2.7 0 1 1 8.9 10.7" fill="none" stroke="#dcdcd6" stroke-width="1.4" stroke-linecap="round"/></svg>
<div class="t" style="left:123.40px;top:902.11px;font-size:13.81px;color:#e6e6e0;font-weight:bold;transform:scaleX(0.8582);transform-origin:0 0;">Villa Franca Xira</div>
<div class="t" style="left:102.60px;top:919.92px;font-size:12.35px;color:#a3a59f;transform:scaleX(0.8818);transform-origin:0 0;">15 sec ago</div>
<div class="abs" style="left:291px;top:893.4px;width:30px;height:17px;background:#2e3e33;border-radius:4px"></div>
<div class="t" style="left:294.50px;top:902.37px;font-size:10.47px;color:#7fd087;font-weight:bold;transform:scaleX(0.8420);transform-origin:0 0;">Good</div>
<svg class="i" style="left:390.6px;top:895.7px" width="12" height="13" viewBox="0 0 12 13"><path d="M6 0.8L11 2.6V6.5C11 9.2 8.8 11.2 6 12.2C3.2 11.2 1 9.2 1 6.5V2.6Z" fill="none" stroke="#76c787" stroke-width="1.2" stroke-linejoin="round"/><path d="M3.3 6.3L5.1 8L8.3 4.6" fill="none" stroke="#76c787" stroke-width="1.2"/></svg>
<div class="t" style="left:407.00px;top:901.81px;font-size:13.81px;color:#76c787;transform:scaleX(0.8295);transform-origin:0 0;">99.87%</div>
<svg class="i" style="left:461.0px;top:895.7px" width="12" height="13" viewBox="0 0 12 13"><path d="M6 0.8L11 2.6V6.5C11 9.2 8.8 11.2 6 12.2C3.2 11.2 1 9.2 1 6.5V2.6Z" fill="none" stroke="#76c787" stroke-width="1.2" stroke-linejoin="round"/><path d="M3.3 6.3L5.1 8L8.3 4.6" fill="none" stroke="#76c787" stroke-width="1.2"/></svg>
<div class="t" style="left:477.00px;top:901.81px;font-size:13.81px;color:#76c787;transform:scaleX(0.8295);transform-origin:0 0;">97.86%</div>
<svg class="i" style="left:530.8px;top:895.7px" width="12" height="13" viewBox="0 0 12 13"><path d="M6 0.8L11 2.6V6.5C11 9.2 8.8 11.2 6 12.2C3.2 11.2 1 9.2 1 6.5V2.6Z" fill="none" stroke="#76c787" stroke-width="1.2" stroke-linejoin="round"/><path d="M3.3 6.3L5.1 8L8.3 4.6" fill="none" stroke="#76c787" stroke-width="1.2"/></svg>
<div class="t" style="left:547.00px;top:901.81px;font-size:13.81px;color:#76c787;transform:scaleX(0.8295);transform-origin:0 0;">99.87%</div>
<div class="t" style="left:613.50px;top:901.81px;font-size:13.81px;color:#b9bbb6;transform:scaleX(0.8817);transform-origin:0 0;">8 kWh</div>
</div></div>
<div class="abs" style="left:623px;top:33px;width:32px;height:882px;background:linear-gradient(90deg,rgba(95,78,64,0) 0%,rgba(95,78,64,0.2) 45%,rgba(105,85,68,0.62) 100%)"></div>
<div class="abs" style="left:659px;top:33px;width:34px;height:882px;background:linear-gradient(90deg,rgba(247,170,120,0.17) 0%,rgba(247,170,120,0.07) 50%,rgba(247,170,120,0) 100%)"></div>
<div class="abs" style="left:615px;top:438px;width:80px;height:80px;border-radius:50%;background:radial-gradient(circle,rgba(240,175,130,0.4) 40%,rgba(240,175,130,0.12) 55%,rgba(240,175,130,0) 70%)"></div>
<div class="abs" style="left:655px;top:33px;width:4px;height:882px;background:#f7922f"></div>
<div class="abs" style="left:638px;top:461px;width:35px;height:35px;border-radius:50%;background:#f7962f"></div>
</div></body></html>
